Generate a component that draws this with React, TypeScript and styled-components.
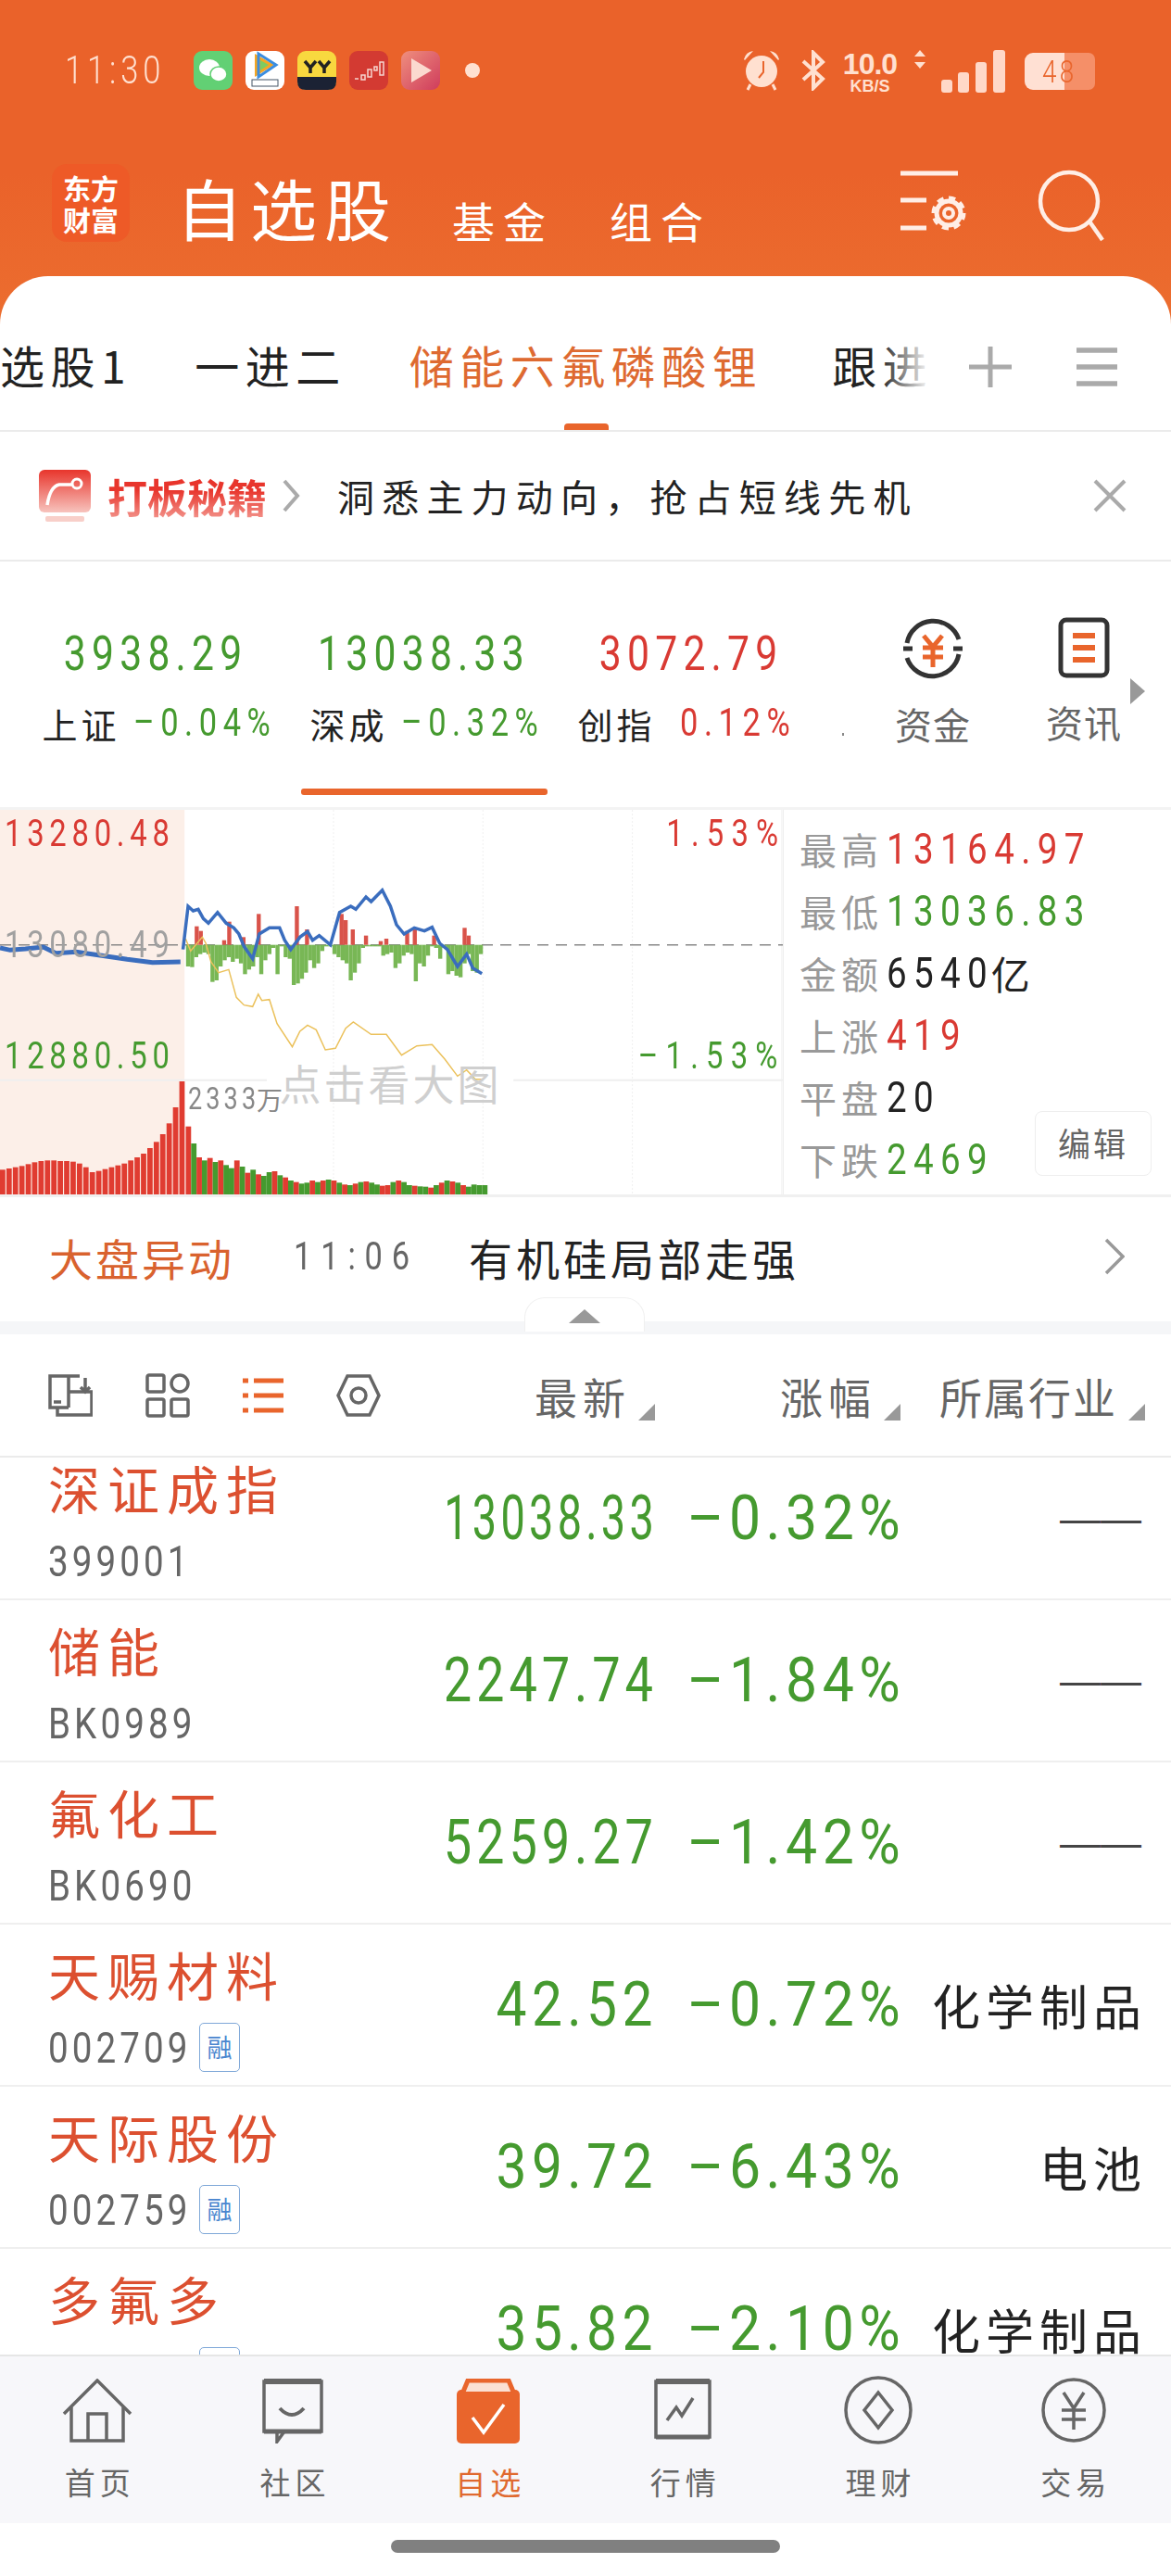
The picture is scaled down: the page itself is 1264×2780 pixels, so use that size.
import React from "react"
import styled, { createGlobalStyle, css } from "styled-components"

const CJK = `"Noto Sans CJK SC", "Noto Sans", sans-serif`
const NUM = `Roboto, "Liberation Sans", sans-serif`
const RED = "#d93a33"
const GREEN = "#459a2f"
const ORANGE = "#e9652c"

// the digits on the phone are tall and narrow, no installed font has that shape
const narrow = css`
  display: inline-block;
  transform: scaleX(0.82);
  transform-origin: left center;
  white-space: nowrap;
  font-family: ${NUM};
  font-weight: 400;
`

const GlobalStyle = createGlobalStyle`
  html, body { margin: 0; padding: 0; background: #fff; }
  body { font-family: ${CJK}; }
  * { box-sizing: border-box; }
`

const Page = styled.div`
  width: 1264px;
  height: 2780px;
  overflow: hidden;
  display: flex;
  flex-direction: column;
  background: #fff;
`
const Top = styled.div`
  background: linear-gradient(180deg, #ea622a 0%, #ea622a 40%, #ed7633 100%);
  flex-shrink: 0;
`
const StatusBar = styled.div`
  height: 152px;
  padding: 54px 82px 0 70px;
  display: flex;
  align-items: flex-start;
  color: #ffe0d0;
`
const ClockBox = styled.div`
  width: 139px;
  height: 44px;
`
const Clock = styled.span`
  ${narrow}
  font-weight: 300;
  font-size: 42px;
  line-height: 44px;
  letter-spacing: 6px;
`
const AppIcons = styled.div`
  display: flex;
  gap: 14px;
  align-items: center;
  height: 44px;
`
const Dot = styled.span`
  width: 16px;
  height: 16px;
  border-radius: 50%;
  background: #ffe0d0;
  margin-left: 13px;
`
const StatusRight = styled.div`
  margin-left: auto;
  display: flex;
  align-items: flex-start;
`
const Speed = styled.div`
  width: 66px;
  margin-left: 14px;
  text-align: center;
  font-family: "Liberation Sans", sans-serif;
  font-weight: 700;
  font-size: 32px;
  line-height: 30px;
  letter-spacing: -1px;
  span {
    display: block;
    font-size: 18px;
    line-height: 18px;
    letter-spacing: 0;
  }
`
const Battery = styled.div`
  width: 76px;
  height: 40px;
  margin: 3px 0 0 20px;
  border-radius: 9px 7px 7px 9px;
  background: linear-gradient(90deg, #ffe0d3 0 56%, #f58f68 56% 100%);
  color: #e9652c;
  display: flex;
  justify-content: center;
  span {
    ${narrow}
    font-weight: 300;
    transform-origin: center;
    font-size: 34px;
    line-height: 40px;
    letter-spacing: 4px;
  }
`

const Header = styled.div`
  height: 146px;
  padding: 25px 0 0 56px;
  display: flex;
  align-items: flex-start;
  color: #fff;
`
const Logo = styled.div`
  width: 84px;
  height: 84px;
  border-radius: 16px;
  background: #ee5a27;
  color: #fff;
  font-size: 30px;
  line-height: 34px;
  font-weight: 700;
  display: flex;
  flex-direction: column;
  align-items: center;
  justify-content: center;
  letter-spacing: 0;
  margin-right: 50px;
`
const PageTitle = styled.div`
  font-size: 72px;
  line-height: 92px;
  letter-spacing: 8px;
  margin-right: 58px;
`
const SubTitle = styled.div`
  font-size: 46px;
  line-height: 64px;
  letter-spacing: 9px;
  margin: 28px 60px 0 0;
`
const HeaderIcons = styled.div`
  margin-left: auto;
  padding: 6px 72px 0 0;
  display: flex;
  gap: 74px;
`

const Tabs = styled.div`
  position: relative;
  height: 168px;
  background: #fff;
  border-radius: 52px 52px 0 0;
  border-bottom: 2px solid #ebebeb;
  display: flex;
  align-items: flex-start;
  overflow: hidden;
`
const TabStrip = styled.div`
  width: 1010px;
  height: 166px;
  display: flex;
  gap: 68px;
  overflow: hidden;
  white-space: nowrap;
  position: relative;
`
const Tab = styled.div<{ $active?: boolean; $push?: number }>`
  position: relative;
  height: 166px;
  margin-left: ${(p) => p.$push ?? 0}px;
  font-size: 48px;
  line-height: 190px;
  letter-spacing: 6.5px;
  color: ${(p) => (p.$active ? "#de6a31" : "#222")};
  flex-shrink: 0;
`
const TabBar = styled.span`
  position: absolute;
  left: 167px;
  bottom: 0;
  width: 48px;
  height: 7px;
  border-radius: 4px 4px 0 0;
  background: ${ORANGE};
`
const Fade = styled.div`
  position: absolute;
  right: 0;
  top: 0;
  width: 60px;
  height: 100%;
  background: linear-gradient(90deg, rgba(255, 255, 255, 0), #fff 90%);
`
const TabTools = styled.div`
  padding: 76px 0 0 36px;
  display: flex;
  gap: 70px;
`

const Promo = styled.div`
  height: 140px;
  border-bottom: 2px solid #ebebeb;
  display: flex;
  align-items: center;
  padding: 0 48px 0 42px;
`
const PromoName = styled.div`
  margin-left: 18px;
  font-size: 43px;
  font-weight: 700;
  line-height: 60px;
  background: linear-gradient(180deg, #e8352c 40%, #f4a29a 100%);
  -webkit-background-clip: text;
  background-clip: text;
  color: transparent;
`
const PromoText = styled.div`
  margin-left: 40px;
  font-size: 40px;
  letter-spacing: 8.2px;
  color: #222;
`
const PromoClose = styled.div`
  margin-left: auto;
  display: flex;
`

const QuoteStrip = styled.div`
  height: 268px;
  border-bottom: 3px solid #f3f3f3;
  display: flex;
  padding-left: 24px;
  position: relative;
`
const IndexItem = styled.div`
  width: 289px;
  display: flex;
  flex-direction: column;
  align-items: center;
  padding-top: 70px;
`
const IndexValue = styled.div<{ $color: string }>`
  ${narrow}
  transform-origin: center;
  font-size: 52px;
  line-height: 60px;
  letter-spacing: 7.6px;
  color: ${(p) => p.$color};
`
const IndexLine = styled.div`
  margin-top: 19px;
  height: 50px;
  display: flex;
  align-items: center;
  gap: 14px;
  white-space: nowrap;
`
const IndexName = styled.span`
  font-size: 38px;
  letter-spacing: 4px;
  color: #222;
`
const PctBox = styled.div<{ $shift?: number }>`
  width: 148px;
  height: 50px;
  padding-left: ${(p) => p.$shift ?? 0}px;
`
const IndexPct = styled.span<{ $color: string }>`
  ${narrow}
  font-size: 42px;
  line-height: 50px;
  letter-spacing: 8px;
  color: ${(p) => p.$color};
`
const IndexBar = styled.div<{ $on?: boolean }>`
  margin-top: 46px;
  width: 266px;
  height: 7px;
  border-radius: 3px;
  background: ${(p) => (p.$on ? ORANGE : "transparent")};
`
const Shortcut = styled.div<{ $w: number }>`
  width: ${(p) => p.$w}px;
  display: flex;
  flex-direction: column;
  align-items: center;
  padding-top: 60px;
`
const ShortcutLabel = styled.div`
  margin-top: 22px;
  font-size: 40px;
  line-height: 50px;
  letter-spacing: 1px;
  color: #666;
  white-space: nowrap;
`
const MoreArrow = styled.div`
  position: absolute;
  right: 28px;
  top: 126px;
  width: 0;
  height: 0;
  border-left: 16px solid #999;
  border-top: 14px solid transparent;
  border-bottom: 14px solid transparent;
`
const TinyDot = styled.span`
  position: absolute;
  left: 909px;
  top: 185px;
  width: 2px;
  height: 3px;
  background: #888;
`

const ChartRow = styled.div`
  height: 418px;
  border-bottom: 3px solid #f0f0f0;
  display: flex;
`
const Plot = styled.div`
  position: relative;
  width: 845px;
  height: 415px;
  flex-shrink: 0;
  svg {
    display: block;
  }
`
const PlotLabel = styled.div<{ $color: string; $top: number; $right?: boolean }>`
  ${narrow}
  position: absolute;
  top: ${(p) => p.$top}px;
  ${(p) => (p.$right ? "right: -3px; transform-origin: right center; letter-spacing: 10px;" : "left: 5px; letter-spacing: 7px;")}
  font-size: 40px;
  line-height: 44px;
  color: ${(p) => p.$color};
`
const VolumeLabel = styled.div`
  position: absolute;
  left: 203px;
  top: 292px;
  width: 104px;
  height: 40px;
  display: flex;
  color: #888;
  b {
    ${narrow}
    width: 74px;
    font-size: 33px;
    line-height: 40px;
    letter-spacing: 5px;
  }
  span {
    font-size: 28px;
    line-height: 40px;
  }
`
const BigHint = styled.div`
  position: absolute;
  left: 290px;
  top: 263px;
  width: 263px;
  text-align: center;
  font-size: 45px;
  line-height: 64px;
  letter-spacing: 3px;
  color: #cfcfcf;
`
const Stats = styled.div`
  position: relative;
  flex: 1;
  padding: 8px 0 0 17px;
  border-left: 1px solid #eee;
`
const StatRow = styled.div`
  height: 67px;
  display: flex;
  align-items: center;
  gap: 4px;
`
const StatName = styled.span`
  font-size: 40px;
  letter-spacing: 5px;
  color: #999;
  white-space: nowrap;
`
const StatValue = styled.span<{ $color: string }>`
  ${narrow}
  font-size: 47px;
  line-height: 60px;
  letter-spacing: 9px;
  color: ${(p) => p.$color};
`
const StatUnit = styled.span`
  margin-left: -33px;
  font-size: 42px;
  color: #222;
`
const EditButton = styled.div`
  position: absolute;
  right: 21px;
  top: 325px;
  width: 126px;
  height: 70px;
  border: 1px solid #eee;
  border-radius: 8px;
  font-size: 35px;
  line-height: 66px;
  text-align: center;
  letter-spacing: 3px;
  color: #666;
`

const AlertRow = styled.div`
  height: 134px;
  padding: 0 50px 6px 53px;
  display: flex;
  align-items: center;
  position: relative;
`
const AlertTag = styled.span`
  font-size: 47px;
  letter-spacing: 3px;
  color: #d9622e;
`
const AlertTimeBox = styled.div`
  margin-left: 64px;
  width: 133px;
  height: 50px;
`
const AlertTime = styled.span`
  ${narrow}
  font-size: 42px;
  line-height: 50px;
  letter-spacing: 12px;
  color: #666;
`
const AlertText = styled.span`
  margin-left: 56px;
  font-size: 47px;
  letter-spacing: 4px;
  color: #222;
`
const AlertChevron = styled.div`
  margin-left: auto;
  display: flex;
`
const Band = styled.div`
  position: relative;
  height: 14px;
  background: #f5f6f8;
  flex-shrink: 0;
`
const Handle = styled.div`
  position: absolute;
  left: 566px;
  bottom: 3px;
  width: 130px;
  height: 37px;
  background: #fff;
  border: 1px solid #f0f0f0;
  border-bottom: none;
  border-radius: 22px 22px 0 0;
  display: flex;
  justify-content: center;
  padding-top: 12px;
  &::after {
    content: "";
    width: 0;
    height: 0;
    border-left: 17px solid transparent;
    border-right: 17px solid transparent;
    border-bottom: 15px solid #999;
  }
`

const Toolbar = styled.div`
  height: 133px;
  border-bottom: 2px solid #ebebeb;
  position: relative;
  display: grid;
  grid-template-columns: 400px 255px 265px 1fr;
  padding: 0 28px 0 52px;
  align-items: center;
  flex-shrink: 0;
`
const ToolIcons = styled.div`
  display: flex;
  gap: 57px;
  align-items: center;
`
const Sort = styled.div<{ $tight?: boolean }>`
  position: relative;
  text-align: right;
  font-size: 46px;
  letter-spacing: ${(p) => (p.$tight ? 2 : 6)}px;
  color: #666;
  padding-right: ${(p) => (p.$tight ? 30 : 26)}px;
  white-space: nowrap;
  &::after {
    content: "";
    position: absolute;
    right: 0;
    bottom: 6px;
    width: 0;
    height: 0;
    border-left: 18px solid transparent;
    border-bottom: 18px solid #999;
  }
`

const List = styled.div`
  flex: 1;
  min-height: 0;
  overflow: hidden;
`
const Rows = styled.div`
  margin-top: -21px;
`
const Row = styled.div`
  height: 175px;
  border-bottom: 2px solid #efefef;
  display: grid;
  grid-template-columns: 400px 253px 267px 1fr;
  padding: 0 32px 0 52px;
  align-items: center;
`
const NameCell = styled.div`
  display: flex;
  flex-direction: column;
`
const StockName = styled.div`
  font-size: 56px;
  line-height: 80px;
  letter-spacing: 8px;
  color: #dc5030;
  white-space: nowrap;
`
const CodeLine = styled.div`
  display: flex;
  align-items: center;
  height: 56px;
  margin-top: 12px;
`
const CodeBox = styled.div`
  width: 163px;
  height: 56px;
`
const Code = styled.span`
  ${narrow}
  font-size: 47px;
  line-height: 56px;
  letter-spacing: 5px;
  color: #666;
`
const MarginTag = styled.span`
  width: 44px;
  height: 53px;
  border: 1px solid #7fa8d8;
  border-radius: 5px;
  color: #4a86cf;
  font-size: 27px;
  line-height: 50px;
  text-align: center;
`
const NumCell = styled.div`
  display: flex;
  justify-content: flex-end;
  margin-right: -5px;
`
const NumText = styled.span<{ $scale: number }>`
  ${narrow}
  transform: scaleX(${(p) => p.$scale});
  transform-origin: right center;
  font-size: 66px;
  line-height: 80px;
  letter-spacing: 6px;
  color: ${GREEN};
`
const Industry = styled.div`
  text-align: right;
  font-size: 52px;
  letter-spacing: 6px;
  margin-right: -6px;
  color: #222;
  white-space: nowrap;
`
const NoIndustry = styled.div`
  text-align: right;
  font: 44px/60px "Liberation Sans", sans-serif;
  color: #444;
`

const Nav = styled.div`
  height: 182px;
  background: #f7f7fa;
  border-top: 2px solid #e6e6e6;
  display: grid;
  grid-template-columns: repeat(6, 1fr);
  flex-shrink: 0;
`
const NavItem = styled.div<{ $active?: boolean }>`
  display: flex;
  flex-direction: column;
  align-items: center;
  color: ${(p) => (p.$active ? "#e0692f" : "#666")};
`
const NavIconBox = styled.div`
  height: 100px;
  padding-top: 24px;
  display: flex;
  align-items: flex-start;
  justify-content: center;
`
const NavLabel = styled.div`
  margin-top: 11px;
  font-size: 33px;
  line-height: 48px;
  letter-spacing: 5px;
  padding-left: 5px;
`
const HomeBar = styled.div`
  height: 57px;
  display: flex;
  justify-content: center;
  padding-top: 18px;
  flex-shrink: 0;
  &::after {
    content: "";
    width: 420px;
    height: 14px;
    border-radius: 7px;
    background: #808080;
  }
`

const AppIcon = ({ children }: { children: React.ReactNode }) => (
  <svg width="42" height="42" viewBox="0 0 42 42">
    {children}
  </svg>
)

const GREEN_BARS = [70, 72, 40, 30, 25, 30, 120, 115, 70, 50, 40, 55, 45, 60, 95, 80, 70, 40, 95, 50, 30, 10, 95, 5, 40, 45, 130, 125, 110, 90, 50, 75, 60, 20, 5, 5, 30, 40, 50, 60, 115, 90, 60, 10, 5, 5, 5, 5, 35, 30, 25, 75, 60, 35, 25, 30, 118, 60, 70, 35, 5, 10, 45, 10, 95, 85, 100, 105, 60, 30, 85, 90, 30]
const RED_BARS: [number, number][] = [[383, 60], [391, 45], [437, 15], [447, 75], [475, 25], [505, 100], [580, 125], [600, 50], [668, 100], [676, 80], [690, 50], [716, 30], [745, 12], [756, 20], [797, 45], [812, 50], [850, 30], [910, 55], [918, 30]]
const PRE_VOLUME = [80, 84, 88, 92, 98, 104, 108, 110, 110, 108, 108, 106, 100, 88, 72, 76, 82, 88, 94, 100, 110, 120, 132, 150, 170, 195, 230, 282, 366, 220]
const POST_VOLUME = [165, 120, 110, 118, 105, 110, 95, 85, 110, 90, 70, 80, 65, 60, 72, 75, 62, 55, 45, 40, 35, 38, 45, 40, 45, 48, 45, 38, 32, 30, 35, 40, 42, 38, 32, 28, 30, 40, 45, 40, 30, 28, 26, 25, 22, 30, 38, 45, 42, 38, 30, 25, 32, 30, 30]
const POST_RED = [1, 3, 5, 8, 10, 12, 15, 17, 19, 22, 24, 26, 28, 30, 32, 35, 36, 38, 41, 44, 46, 48, 50]

const PRICE = "M0,465 L20,472 L50,468 L85,462 L110,482 L150,478 L200,490 L250,502 L300,512 L355,510"
const PRICE_DAY = "M360,470 L370,330 L380,345 L390,340 L400,370 L410,385 L428,350 L445,385 L460,400 L470,420 L480,460 L497,500 L510,420 L530,400 L550,400 L560,440 L572,470 L590,430 L605,412 L615,440 L628,425 L650,455 L668,350 L690,330 L700,340 L720,300 L730,315 L752,278 L768,330 L780,390 L795,420 L815,400 L835,410 L850,398 L865,450 L880,470 L900,525 L918,485 L930,530 L948,548"
const AVERAGE = "M365,435 L375,475 L385,455 L398,430 L405,450 L415,510 L430,545 L450,535 L465,625 L480,650 L497,655 L508,615 L515,635 L530,632 L545,710 L575,785 L590,735 L605,715 L622,730 L640,795 L660,790 L680,725 L695,705 L730,745 L760,745 L790,812 L820,782 L850,778 L875,825 L900,880 L918,860 L935,890 L950,890"

const ChartDrawing = () => (
  <svg width="845" height="415" viewBox="0 18 1540 1245" preserveAspectRatio="none">
    <rect x="0" y="18" width="363" height="1245" fill="#fcefe8" />
    {[656, 950, 1244, 1538].map((x) => (
      <line key={x} x1={x} y1="18" x2={x} y2="1263" stroke="#f0f0f0" strokeWidth="1" vectorEffect="non-scaling-stroke" strokeDasharray={x === 1538 ? undefined : "2 2"} />
    ))}
    <path d="M0,893 H525 M1010,893 H1540" stroke="#efefef" strokeWidth="2" vectorEffect="non-scaling-stroke" />
    <line x1="0" y1="455" x2="1540" y2="455" stroke="#888" strokeWidth="1.5" vectorEffect="non-scaling-stroke" strokeDasharray="12 8" />
    {GREEN_BARS.map((h, i) => (
      <rect key={i} x={366 + i * 8} y="455" width="8" height={h} fill="#78b755" />
    ))}
    {RED_BARS.map(([x, h]) => (
      <rect key={x} x={x} y={455 - h} width="8" height={h} fill="#d9534a" />
    ))}
    <path d={AVERAGE} fill="none" stroke="#ebc15b" strokeWidth="1.5" vectorEffect="non-scaling-stroke" />
    <path d={PRICE} fill="none" stroke="#3a6dbe" strokeWidth="5" vectorEffect="non-scaling-stroke" />
    <path d={PRICE_DAY} fill="none" stroke="#3a6dbe" strokeWidth="3.5" vectorEffect="non-scaling-stroke" />
    {PRE_VOLUME.map((h, i) => (
      <rect key={i} x={i * 12.6} y={1263 - h} width="10.5" height={h} fill="#e03c31" />
    ))}
    {POST_VOLUME.map((h, i) => (
      <rect key={i} x={376 + i * 10.6} y={1263 - h} width="10.6" height={h} fill={POST_RED.includes(i) ? "#e03c31" : "#459a2f"} />
    ))}
  </svg>
)

const rows = [
  { name: "深证成指", code: "399001", price: "13038.33", pct: "–0.32%" },
  { name: "储能", code: "BK0989", price: "2247.74", pct: "–1.84%" },
  { name: "氟化工", code: "BK0690", price: "5259.27", pct: "–1.42%" },
  { name: "天赐材料", code: "002709", price: "42.52", pct: "–0.72%", tag: true, industry: "化学制品" },
  { name: "天际股份", code: "002759", price: "39.72", pct: "–6.43%", tag: true, industry: "电池" },
  { name: "多氟多", code: "002407", price: "35.82", pct: "–2.10%", tag: true, industry: "化学制品" },
]

// the app squeezes long prices so they fit the column
const priceScale = (price: string) => (price.length > 7 ? 0.71 : price.length > 5 ? 0.82 : 0.89)

const stats = [
  { k: "最高", v: "13164.97", c: RED },
  { k: "最低", v: "13036.83", c: GREEN },
  { k: "金额", v: "6540", unit: "亿", c: "#222" },
  { k: "上涨", v: "419", c: RED },
  { k: "平盘", v: "20", c: "#222" },
  { k: "下跌", v: "2469", c: GREEN },
]

const navIcons = [
  <svg key="h" width="76" height="70" viewBox="0 0 76 70" fill="none" stroke="#666" strokeWidth="3.5"><path d="M2,38 L38,2 L74,38" /><path d="M10,31 V67 H66 V31" /><path d="M28,67 V38 H48 V67" /></svg>,
  <svg key="c" width="66" height="70" viewBox="0 0 66 70" fill="none" stroke="#666" strokeWidth="3.5"><path d="M2,3 H64 V57 H24 L16,68 V57 H2 Z" /><path d="M2,3 H64" strokeWidth="6" /><path d="M2,57 H64" strokeWidth="5" /><path d="M19,32 Q32,46 45,32" strokeWidth="4" /></svg>,
  <svg key="w" width="68" height="70" viewBox="0 0 68 70"><rect x="0" y="12" width="68" height="58" rx="5" fill="#e9652c" /><path d="M7,14 L12,2 H56 L61,14" fill="#fbe0d3" stroke="#e9652c" strokeWidth="5" /><path d="M18,42 L30,58 L52,28" fill="none" stroke="#fff" strokeWidth="3.5" transform="translate(-1 0)" /></svg>,
  <svg key="m" width="62" height="66" viewBox="0 0 62 66" fill="none" stroke="#666" strokeWidth="3.5"><rect x="2" y="3" width="58" height="60" /><path d="M2,3 H60" strokeWidth="6" /><path d="M2,63 H60" strokeWidth="5" /><path d="M14,45 L24,31 L30,40 L42,21" strokeWidth="3.5" /></svg>,
  <svg key="f" width="74" height="76" viewBox="0 0 74 76" fill="none" stroke="#666" strokeWidth="3.5" style={{ marginTop: -4 }}><circle cx="37" cy="38" r="35" /><path d="M37,19 L52,38 L37,57 L22,38 Z" /></svg>,
  <svg key="t" width="70" height="74" viewBox="0 0 70 74" fill="none" stroke="#666" strokeWidth="3.5" style={{ marginTop: -3 }}><circle cx="35" cy="37" r="33" /><path d="M24,18 L35,35 L46,18 M22,37 H48 M22,47 H48 M35,35 V58" /></svg>,
]
const navLabels = ["首页", "社区", "自选", "行情", "理财", "交易"]

export default function App() {
  return (
    <Page>
      <GlobalStyle />
      <Top>
        <StatusBar>
          <ClockBox>
            <Clock>11:30</Clock>
          </ClockBox>
          <AppIcons>
            <AppIcon>
              <rect width="42" height="42" rx="9" fill="#62d074" />
              <ellipse cx="17" cy="18" rx="11" ry="9" fill="#fff" />
              <ellipse cx="27" cy="25" rx="9" ry="8" fill="#fff" stroke="#62d074" strokeWidth="1.5" />
            </AppIcon>
            <AppIcon>
              <rect width="42" height="42" rx="9" fill="#fff" />
              <path d="M10,3 L31,15 L10,28 Z" fill="#f5a623" />
              <path d="M14,3 L33,15 L14,28 Z" fill="none" stroke="#3b8de0" strokeWidth="3" />
              <path d="M16,10 L25,15 L16,21 Z" fill="#7ecb60" />
              <rect x="7" y="31" width="28" height="7" fill="none" stroke="#456" strokeWidth="1" />
            </AppIcon>
            <AppIcon>
              <rect width="42" height="42" rx="9" fill="#f8d83f" />
              <path d="M0,28 H42 V33 Q42,42 33,42 H9 Q0,42 0,33 Z" fill="#1b2234" />
              <path d="M8,11 L14,18 L20,11 M14,18 V24 M23,11 L29,18 L35,11 M29,18 V24" fill="none" stroke="#222" strokeWidth="3.5" />
            </AppIcon>
            <AppIcon>
              <rect width="42" height="42" rx="9" fill="#d33a32" />
              <path d="M6,30 H10 M13,26 H17 V31 H13 Z M20,20 H24 V28 H20 Z M27,17 H30 V21 H27 Z M33,12 H37 V26 H33 Z" fill="none" stroke="#f6d5cf" strokeWidth="1.5" />
            </AppIcon>
            <AppIcon>
              <defs>
                <linearGradient id="pinkIcon" x1="0" y1="0" x2="1" y2="1">
                  <stop offset="0" stopColor="#ef8f7e" />
                  <stop offset="1" stopColor="#cf3c5c" />
                </linearGradient>
              </defs>
              <rect width="42" height="42" rx="9" fill="url(#pinkIcon)" />
              <path d="M11,8 L33,21 L11,34 Z" fill="#fbd9cf" />
            </AppIcon>
            <Dot />
          </AppIcons>
          <StatusRight>
            <svg width="42" height="44" viewBox="0 0 42 44" fill="#ffe0d0">
              <path d="M2,10 Q4,2 12,1 L3,11 Z M40,10 Q38,2 30,1 L39,11 Z" />
              <circle cx="21" cy="23" r="17" />
              <path d="M23,12 V24 L18,30" stroke="#e9652c" strokeWidth="2" fill="none" />
              <path d="M9,37 L6,43 M33,37 L36,43" stroke="#ffe0d0" strokeWidth="3" />
            </svg>
            <svg width="28" height="44" viewBox="0 0 28 44" fill="none" stroke="#ffe0d0" strokeWidth="4" style={{ marginLeft: 21 }}>
              <path d="M3,12 L24,31 L14,41 V3 L24,13 L3,32" />
            </svg>
            <Speed>
              10.0<span>KB/S</span>
            </Speed>
            <svg width="14" height="20" viewBox="0 0 14 20" fill="#ffe0d0" style={{ marginLeft: 14 }}>
              <path d="M7,0 L13,7 H1 Z M7,20 L13,13 H1 Z" />
            </svg>
            <svg width="70" height="46" viewBox="0 0 70 46" fill="#ffd8c8" style={{ marginLeft: 16 }}>
              <rect x="0" y="32" width="12" height="14" rx="3" />
              <rect x="18" y="24" width="12" height="22" rx="3" />
              <rect x="37" y="13" width="12" height="33" rx="3" />
              <rect x="56" y="0" width="13" height="46" rx="3" />
            </svg>
            <Battery>
              <span>48</span>
            </Battery>
          </StatusRight>
        </StatusBar>
        <Header>
          <Logo>
            <span>东方</span>
            <span>财富</span>
          </Logo>
          <PageTitle>自选股</PageTitle>
          <SubTitle>基金</SubTitle>
          <SubTitle>组合</SubTitle>
          <HeaderIcons>
            <svg width="74" height="68" viewBox="0 0 74 68" fill="none" stroke="#ffeee6" strokeWidth="5">
              <path d="M0,4 H62 M0,33 H28 M0,63 H28" />
              <circle cx="52" cy="47" r="5" strokeWidth="4" />
              <circle cx="52" cy="47" r="13" strokeWidth="5" />
              <circle cx="52" cy="47" r="16" strokeWidth="5" strokeDasharray="7 5.5" />
            </svg>
            <svg width="72" height="78" viewBox="0 0 72 78" fill="none" stroke="#ffeee6" strokeWidth="4.5">
              <circle cx="34" cy="34" r="31" />
              <path d="M56,56 L70,76" />
            </svg>
          </HeaderIcons>
        </Header>
        <Tabs>
          <TabStrip>
            <Tab>选股1</Tab>
            <Tab>一进二</Tab>
            <Tab $active>
              储能六氟磷酸锂
              <TabBar />
            </Tab>
            <Tab $push={7}>跟进</Tab>
            <Fade />
          </TabStrip>
          <TabTools>
            <svg width="46" height="44" viewBox="0 0 46 44" stroke="#aaa" strokeWidth="5">
              <path d="M0,22 H46 M23,0 V44" />
            </svg>
            <svg width="44" height="44" viewBox="0 0 44 44" stroke="#aaa" strokeWidth="5.5">
              <path d="M0,4 H44 M0,22 H44 M0,40 H44" />
            </svg>
          </TabTools>
        </Tabs>
      </Top>

      <Promo>
        <svg width="56" height="56" viewBox="0 0 56 56">
          <defs>
            <linearGradient id="promoIcon" x1="0" y1="0" x2="0" y2="1">
              <stop offset="0" stopColor="#e8352c" />
              <stop offset="1" stopColor="#f7c3bd" />
            </linearGradient>
          </defs>
          <rect width="56" height="46" rx="6" fill="url(#promoIcon)" />
          <rect x="7" y="50" width="42" height="6" rx="2" fill="#f8cfc9" />
          <path d="M9,38 Q12,18 22,16 H36" fill="none" stroke="#fff" strokeWidth="3.5" />
          <circle cx="41" cy="15" r="5" fill="none" stroke="#fff" strokeWidth="3" />
        </svg>
        <PromoName>打板秘籍</PromoName>
        <svg width="20" height="36" viewBox="0 0 20 36" fill="none" stroke="#aaa" strokeWidth="4" style={{ marginLeft: 16 }}>
          <path d="M3,2 L17,18 L3,34" />
        </svg>
        <PromoText>洞悉主力动向，抢占短线先机</PromoText>
        <PromoClose>
          <svg width="36" height="36" viewBox="0 0 36 36" stroke="#aaa" strokeWidth="4">
            <path d="M2,2 L34,34 M34,2 L2,34" />
          </svg>
        </PromoClose>
      </Promo>

      <QuoteStrip>
        <IndexItem>
          <IndexValue $color={GREEN}>3938.29</IndexValue>
          <IndexLine>
            <IndexName>上证</IndexName>
            <PctBox>
              <IndexPct $color={GREEN}>–0.04%</IndexPct>
            </PctBox>
          </IndexLine>
          <IndexBar />
        </IndexItem>
        <IndexItem>
          <IndexValue $color={GREEN}>13038.33</IndexValue>
          <IndexLine>
            <IndexName>深成</IndexName>
            <PctBox>
              <IndexPct $color={GREEN}>–0.32%</IndexPct>
            </PctBox>
          </IndexLine>
          <IndexBar $on />
        </IndexItem>
        <IndexItem>
          <IndexValue $color={RED}>3072.79</IndexValue>
          <IndexLine>
            <IndexName>创指</IndexName>
            <PctBox $shift={12}>
              <IndexPct $color={RED}>0.12%</IndexPct>
            </PctBox>
          </IndexLine>
          <IndexBar />
        </IndexItem>
        <Shortcut $w={232}>
          <svg width="68" height="68" viewBox="0 0 68 68" fill="none" stroke="#333" strokeWidth="5">
            <path d="M6,28 A29,29 0 0 1 62,24 M62,40 A29,29 0 0 1 6,44" />
            <path d="M2,34 H12 M56,34 H66" />
            <path d="M24,20 L34,32 L44,20 M23,33 H45 M23,43 H45 M34,32 V54" stroke={ORANGE} strokeWidth="5" />
          </svg>
          <ShortcutLabel>资金</ShortcutLabel>
        </Shortcut>
        <Shortcut $w={94}>
          <svg width="56" height="66" viewBox="0 0 56 66" fill="none">
            <rect x="3" y="3" width="50" height="60" rx="6" stroke="#333" strokeWidth="5" />
            <path d="M16,20 H40 M16,33 H40 M16,46 H40" stroke={ORANGE} strokeWidth="6" />
          </svg>
          <ShortcutLabel>资讯</ShortcutLabel>
        </Shortcut>
        <TinyDot />
        <MoreArrow />
      </QuoteStrip>

      <ChartRow>
        <Plot>
          <ChartDrawing />
          <PlotLabel $color={RED} $top={4}>13280.48</PlotLabel>
          <PlotLabel $color="#a0a0a0" $top={124}>13080.49</PlotLabel>
          <PlotLabel $color={GREEN} $top={244}>12880.50</PlotLabel>
          <PlotLabel $color={RED} $top={4} $right>1.53%</PlotLabel>
          <PlotLabel $color={GREEN} $top={244} $right>–1.53%</PlotLabel>
          <VolumeLabel>
            <b>2333</b>
            <span>万</span>
          </VolumeLabel>
          <BigHint>点击看大图</BigHint>
        </Plot>
        <Stats>
          {stats.map((s) => (
            <StatRow key={s.k}>
              <StatName>{s.k}</StatName>
              <StatValue $color={s.c}>{s.v}</StatValue>
              {s.unit && <StatUnit>{s.unit}</StatUnit>}
            </StatRow>
          ))}
          <EditButton>编辑</EditButton>
        </Stats>
      </ChartRow>

      <AlertRow>
        <AlertTag>大盘异动</AlertTag>
        <AlertTimeBox>
          <AlertTime>11:06</AlertTime>
        </AlertTimeBox>
        <AlertText>有机硅局部走强</AlertText>
        <AlertChevron>
          <svg width="22" height="40" viewBox="0 0 22 40" fill="none" stroke="#999" strokeWidth="3.5">
            <path d="M2,2 L20,20 L2,38" />
          </svg>
        </AlertChevron>
      </AlertRow>
      <Band>
        <Handle />
      </Band>

      <Toolbar>
        <ToolIcons>
          <svg width="48" height="46" viewBox="0 0 48 46" fill="none" stroke="#666" strokeWidth="3.5">
            <path d="M22,36 H2 V2 H22 V36 M22,2 H34 M40,4 V18 M35,14 L40,19 L45,14" />
            <path d="M22,19 H47 V44 H10 V36" />
            <path d="M6,30 H14" />
          </svg>
          <svg width="48" height="48" viewBox="0 0 48 48" fill="none" stroke="#666" strokeWidth="3.5">
            <rect x="2" y="2" width="18" height="18" rx="2" />
            <circle cx="37" cy="11" r="9" />
            <rect x="2" y="28" width="18" height="18" rx="2" />
            <rect x="28" y="28" width="18" height="18" rx="2" />
          </svg>
          <svg width="44" height="38" viewBox="0 0 44 38" stroke={ORANGE} strokeWidth="5">
            <path d="M0,3 H6 M12,3 H44 M0,19 H6 M12,19 H44 M0,35 H6 M12,35 H44" />
          </svg>
          <svg width="48" height="46" viewBox="0 0 48 46" fill="none" stroke="#666" strokeWidth="3.5">
            <path d="M12,2 H36 L46,23 L36,44 H12 L2,23 Z" />
            <circle cx="24" cy="23" r="8" />
          </svg>
        </ToolIcons>
        <Sort>最新</Sort>
        <Sort>涨幅</Sort>
        <Sort $tight>所属行业</Sort>
      </Toolbar>

      <List>
        <Rows>
          {rows.map((r) => (
            <Row key={r.code}>
              <NameCell>
                <StockName>{r.name}</StockName>
                <CodeLine>
                  <CodeBox>
                    <Code>{r.code}</Code>
                  </CodeBox>
                  {r.tag && <MarginTag>融</MarginTag>}
                </CodeLine>
              </NameCell>
              <NumCell>
                <NumText $scale={priceScale(r.price)}>{r.price}</NumText>
              </NumCell>
              <NumCell>
                <NumText $scale={0.92}>{r.pct}</NumText>
              </NumCell>
              {r.industry ? <Industry>{r.industry}</Industry> : <NoIndustry>——</NoIndustry>}
            </Row>
          ))}
        </Rows>
      </List>

      <Nav>
        {navLabels.map((label, i) => (
          <NavItem key={label} $active={i === 2}>
            <NavIconBox>{navIcons[i]}</NavIconBox>
            <NavLabel>{label}</NavLabel>
          </NavItem>
        ))}
      </Nav>
      <HomeBar />
    </Page>
  )
}
